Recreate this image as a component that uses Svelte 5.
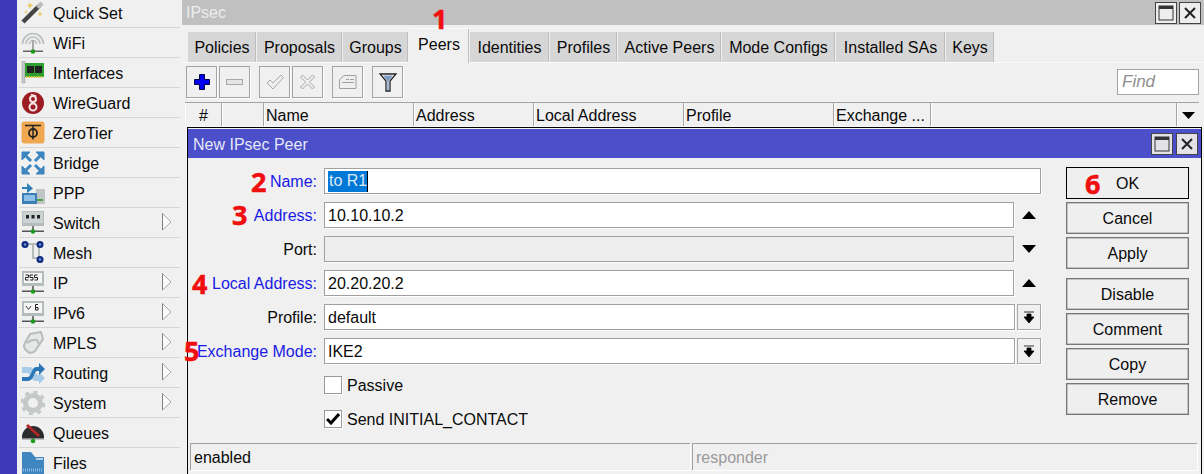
<script lang="ts">
  // Winbox style IPsec window with the "New IPsec Peer" dialog on top.
  const menu = [
    { id: 'quickset', label: 'Quick Set' },
    { id: 'wifi', label: 'WiFi' },
    { id: 'interfaces', label: 'Interfaces' },
    { id: 'wireguard', label: 'WireGuard' },
    { id: 'zerotier', label: 'ZeroTier' },
    { id: 'bridge', label: 'Bridge' },
    { id: 'ppp', label: 'PPP' },
    { id: 'switch', label: 'Switch', sub: true },
    { id: 'mesh', label: 'Mesh' },
    { id: 'ip', label: 'IP', sub: true },
    { id: 'ipv6', label: 'IPv6', sub: true },
    { id: 'mpls', label: 'MPLS', sub: true },
    { id: 'routing', label: 'Routing', sub: true },
    { id: 'system', label: 'System', sub: true },
    { id: 'queues', label: 'Queues' },
    { id: 'files', label: 'Files' }
  ];
  const tabs = [
    { label: 'Policies', w: 69 },
    { label: 'Proposals', w: 86 },
    { label: 'Groups', w: 66 },
    { label: 'Peers', w: 61 },
    { label: 'Identities', w: 80 },
    { label: 'Profiles', w: 68 },
    { label: 'Active Peers', w: 104 },
    { label: 'Mode Configs', w: 114 },
    { label: 'Installed SAs', w: 110 },
    { label: 'Keys', w: 49 }
  ];
  const columns = [
    { label: '#', cls: 'c-num' },
    { label: '', cls: 'c-flag' },
    { label: 'Name', cls: 'c-name' },
    { label: 'Address', cls: 'c-addr' },
    { label: 'Local Address', cls: 'c-local' },
    { label: 'Profile', cls: 'c-profile' },
    { label: 'Exchange ...', cls: 'c-mode' },
    { label: '', cls: 'c-rest' }
  ];
</script>

{#snippet winButtons()}
  <span class="winbtn">
    <svg width="16" height="16" viewBox="0 0 16 16"><rect x="1" y="1" width="14" height="14" fill="none" stroke="#333" /><rect x="1" y="1" width="14" height="3" fill="#333" /></svg>
  </span>
  <span class="winbtn">
    <svg width="12" height="12" viewBox="0 0 12 12"><path d="M1 1 L11 11 M11 1 L1 11" stroke="#222" stroke-width="2" /></svg>
  </span>
{/snippet}

{#snippet terminal(text)}
  <rect x="1" y="0" width="22" height="15" fill="#b5bcbc" />
  <rect x="3" y="2" width="18" height="10" fill="#f6f6f6" />
  {#if text === 'dots'}
    <rect x="2" y="1" width="20" height="11" fill="#ccd2d2" />
    <path d="M5 4h3v3.500H5zM10.500 4h3v3.500h-3zM16 4h3v3.500h-3z" fill="#222" />
  {:else if text === '255'}
    <path d="M4.500 4h3v2.500h-3v2.500h3M9 4h3M9 4v2.500h3v2.500H9M13.500 4h3M13.500 4v2.500h3v2.500h-3" fill="none" stroke="#222" />
  {:else}
    <path d="M5 5l2.500 3.500L10 5" fill="none" stroke="#444" />
    <path d="M17 3.500h-2.500v5.500H17V6.500h-2.500" fill="none" stroke="#222" />
  {/if}
  <rect x="11" y="15" width="2" height="5" fill="#777" />
  <rect x="1" y="19.500" width="22" height="1.500" fill="#555" />
  <circle cx="12" cy="20.500" r="2.300" fill="#1d9a1d" />
{/snippet}

{#snippet icon(id)}
  <svg class="mi" width="24" height="24" viewBox="0 0 24 24">
    {#if id === 'quickset'}
      <path d="M2 21 L18 5" stroke="#444" stroke-width="4.500" />
      <path d="M16.500 6.500 L21 2" stroke="#bbb" stroke-width="4.500" />
      <path d="M9 1l1 2.500 2.500 1-2.500 1-1 2.500-1-2.500-2.500-1 2.500-1zM19 10l.8 2.200 2.200.8-2.200.8-.8 2.200-.8-2.200-2.200-.8 2.200-.8zM5 9l.6 1.400 1.400.6-1.400.6L5 13l-.6-1.400L3 11l1.400-.6z" fill="#e6c85a" />
    {:else if id === 'wifi'}
      <path d="M1.500 13a10.500 10.500 0 0 1 21 0M5 13a7 7 0 0 1 14 0M8.500 13a3.500 3.500 0 0 1 7 0" fill="none" stroke="#bcc0c0" stroke-width="1.700" />
      <rect x="11" y="9" width="2" height="11" fill="#aaa" />
      <rect x="2" y="19.500" width="20" height="1.500" fill="#666" />
      <circle cx="12" cy="20.500" r="2.300" fill="#1d9a1d" />
    {:else if id === 'interfaces'}
      <rect x="1" y="0" width="3" height="22" fill="#c5c9c9" stroke="#999" stroke-width=".5" />
      <rect x="4" y="2" width="19" height="14" fill="#2fa02f" />
      <rect x="6" y="5" width="7" height="7" fill="#222" />
      <rect x="14" y="5" width="7" height="7" fill="#222" />
      <path d="M5 16h17" stroke="#d8c840" stroke-width="2" stroke-dasharray="1.500 1" />
    {:else if id === 'wireguard'}
      <circle cx="12" cy="12" r="11" fill="#9c1c22" />
      <circle cx="12" cy="16" r="3.500" fill="none" stroke="#f4e4e4" stroke-width="2" />
      <circle cx="12" cy="8" r="3" fill="none" stroke="#f4e4e4" stroke-width="2" />
      <path d="M10 3.500l5 1.500" stroke="#f4e4e4" stroke-width="1.500" />
    {:else if id === 'zerotier'}
      <rect x="0.500" y="0.500" width="23" height="22" rx="3" fill="#f0a850" />
      <path d="M4 4.500h16" stroke="#222" stroke-width="1.500" />
      <path d="M12 4.500v14" stroke="#222" stroke-width="1.500" />
      <circle cx="12" cy="12" r="4" fill="none" stroke="#222" stroke-width="1.800" />
    {:else if id === 'bridge'}
      <g fill="#3d86c0" stroke="#3d86c0">
        <path d="M1 1h8L1 9z" /><path d="M23 1h-8l8 8z" /><path d="M1 23h8l-8-8z" /><path d="M23 23h-8l8-8z" />
        <path d="M4 4l6 6M20 4l-6 6M4 20l6-6M20 20l-6-6" stroke-width="3" />
      </g>
    {:else if id === 'ppp'}
      <rect x="15" y="8" width="9" height="15" fill="#c0c4c4" />
      <path d="M16 19h6" stroke="#2a9a2a" stroke-width="1.500" />
      <rect x="1" y="12" width="15" height="11" fill="#3d7fb5" />
      <rect x="3" y="14" width="11" height="6" fill="#8ec0e8" />
      <path d="M1 6h5V2l6 5.500L6 12V8H1z" fill="#2f7fb8" />
    {:else if id === 'switch'}
      {@render terminal('dots')}
    {:else if id === 'mesh'}
      <path d="M6 3h12v16M12 3v14h6" fill="none" stroke="#b5baba" stroke-width="2" />
      <circle cx="4" cy="3.500" r="3.500" fill="#0c2a80" /><circle cx="4" cy="3.500" r="1.300" fill="#7d93c8" />
      <circle cx="19" cy="3.500" r="3.500" fill="#0c2a80" /><circle cx="19" cy="3.500" r="1.300" fill="#7d93c8" />
      <circle cx="19" cy="18.500" r="3.500" fill="#0c2a80" /><circle cx="19" cy="18.500" r="1.300" fill="#7d93c8" />
    {:else if id === 'ip'}
      {@render terminal('255')}
    {:else if id === 'ipv6'}
      {@render terminal('v6')}
    {:else if id === 'mpls'}
      <path d="M9 3 L20 1 L22 8 L14 20 Q11 23 7 21 L4 18 Q2 15 4 12z" fill="#e6e8e8" stroke="#b8bcbc" stroke-width="2" />
      <path d="M6 12 Q11 8 16 9 L18 13" fill="none" stroke="#b8bcbc" stroke-width="2" />
    {:else if id === 'routing'}
      <path d="M1 6h8c3 0 3 3 5 5l3 3h1v-3l6 6-6 6v-3h-3c-4 0-5-5-8-8H1z" fill="#a8cce8" />
      <path d="M1 16h6c3 0 4-10 8-10h3V2l6 6-6 6v-4h-2c-3 0-3 10-9 10H1z" fill="#2b76b5" />
    {:else if id === 'system'}
      <circle cx="12" cy="12" r="7.500" fill="none" stroke="#c4c8c8" stroke-width="5" />
      <circle cx="12" cy="12" r="11" fill="none" stroke="#c4c8c8" stroke-width="3" stroke-dasharray="4 4.640" />
    {:else if id === 'queues'}
      <path d="M1 16a11 11 0 0 1 22 0v1H1z" fill="#2c2c2c" />
      <path d="M6 4 L18 15" stroke="#b02828" stroke-width="3" />
      <rect x="1" y="17" width="22" height="1.500" fill="#888" />
      <rect x="11" y="17" width="2" height="3" fill="#777" />
      <circle cx="12" cy="20" r="2.300" fill="#1d9a1d" />
    {:else if id === 'files'}
      <path d="M1 1h9l4 5h9v17H1z" fill="#3f86c0" />
      <path d="M15 8h7" stroke="#dcecf8" stroke-width="1.500" />
      <path d="M2 19h20" stroke="#86b6dc" stroke-width="3" stroke-dasharray="1 1" />
    {/if}
  </svg>
{/snippet}

<div class="page">
  <div class="strip"></div>

  <nav class="side">
    {#each menu as item}
      <div class="mrow">
        {@render icon(item.id)}
        <span class="mlabel">{item.label}</span>
        {#if item.sub}
          <svg class="sub" width="10" height="18" viewBox="0 0 10 18"><path d="M.500 .500 L9 9 L.500 17z" fill="#fafafa" stroke="#a8a8a8" /><path d="M.500 .500V17" stroke="#808080" /></svg>
        {/if}
      </div>
    {/each}
  </nav>

  <main class="main">
    <header class="wintitle">
      <span>IPsec</span>
      <span class="winbtns">{@render winButtons()}</span>
    </header>

    <div class="tabs">
      {#each tabs as t}
        <span class="tab" class:active={t.label === 'Peers'} style="width: {t.w}px">{t.label}</span>
      {/each}
    </div>

    <div class="toolbar">
      <button class="tool">
        <svg width="16" height="16" viewBox="0 0 16 16"><path d="M5.500 .500h5v5h5v5h-5v5h-5v-5h-5v-5h5z" fill="#0000ee" stroke="#00004a" /></svg>
      </button>
      <button class="tool">
        <svg width="17" height="6" viewBox="0 0 17 6"><rect x=".5" y=".5" width="16" height="5" fill="#e4e4e4" stroke="#a8a8a8" /></svg>
      </button>
      <button class="tool gap">
        <svg width="18" height="16" viewBox="0 0 18 16"><path d="M1 9l3-3 3 3 8-8 2.500 2.500L7 15z" fill="#eee" stroke="#a8a8a8" /></svg>
      </button>
      <button class="tool">
        <svg width="17" height="16" viewBox="0 0 16 16"><path d="M1 3l2-2 5 5 5-5 2 2-5 5 5 5-2 2-5-5-5 5-2-2 5-5z" fill="#eee" stroke="#a8a8a8" /></svg>
      </button>
      <button class="tool gap">
        <svg width="18" height="14" viewBox="0 0 18 14"><path d="M5 .500h12v13H.5V4.500z" fill="#eee" stroke="#a0a0a0" /><path d="M7 4.500h3M11 4.500h4M3 7.500h12" stroke="#a0a0a0" /></svg>
      </button>
      <button class="tool gap">
        <svg width="18" height="19" viewBox="0 0 18 19"><path d="M1 1h16l-6 7v10H7V8z" fill="#fff" stroke="#222" stroke-width="1.300" /><path d="M4 2.500h10L9.700 8v9H8.300V8z" fill="#7e9cc4" /></svg>
      </button>
      <span class="find">Find</span>
    </div>

    <div class="thead">
      {#each columns as c}
        <span class="th {c.cls}">{c.label}</span>
      {/each}
      <span class="th c-arrow"><svg width="13" height="7" viewBox="0 0 13 7"><path d="M0 0h13L6.500 7z" fill="#000" /></svg></span>
    </div>

    <section class="dialog">
      <header class="dtitle">
        <span class="dname">New IPsec Peer</span>
        <span class="winbtns">{@render winButtons()}</span>
      </header>

      <div class="dbody">
        <div class="form">
          <div class="row">
            <span class="lbl req">Name:</span>
            <span class="input"><span class="sel">to R1</span><span class="caret"></span></span>
          </div>
          <div class="row">
            <span class="lbl req">Address:</span>
            <span class="input short">10.10.10.2</span>
            <svg class="updown" width="14" height="8" viewBox="0 0 14 8"><path d="M0 8L7 0l7 8z" fill="#000" /></svg>
          </div>
          <div class="row">
            <span class="lbl">Port:</span>
            <span class="input short off"></span>
            <svg class="updown" width="14" height="8" viewBox="0 0 14 8"><path d="M0 0l7 8 7-8z" fill="#000" /></svg>
          </div>
          <div class="row">
            <span class="lbl req">Local Address:</span>
            <span class="input short">20.20.20.2</span>
            <svg class="updown" width="14" height="8" viewBox="0 0 14 8"><path d="M0 8L7 0l7 8z" fill="#000" /></svg>
          </div>
          <div class="row">
            <span class="lbl">Profile:</span>
            <span class="input">default</span>
            <span class="drop"><svg width="12" height="13" viewBox="0 0 12 13"><path d="M1 1h10M4 3h4v3h3l-5 6-5-6h3z" fill="#000" stroke="#000" stroke-width=".8" /></svg></span>
          </div>
          <div class="row">
            <span class="lbl req">Exchange Mode:</span>
            <span class="input">IKE2</span>
            <span class="drop"><svg width="12" height="13" viewBox="0 0 12 13"><path d="M1 1h10M4 3h4v3h3l-5 6-5-6h3z" fill="#000" stroke="#000" stroke-width=".8" /></svg></span>
          </div>
          <div class="row">
            <span class="lbl"></span>
            <span class="check"></span>
            <span class="chk-label">Passive</span>
          </div>
          <div class="row">
            <span class="lbl"></span>
            <span class="check"><svg width="14" height="12" viewBox="0 0 14 12"><path d="M1 6l4 4 8-9" fill="none" stroke="#000" stroke-width="3" /></svg></span>
            <span class="chk-label">Send INITIAL_CONTACT</span>
          </div>
        </div>

        <div class="actions">
          <button class="act default">OK</button>
          <button class="act">Cancel</button>
          <button class="act">Apply</button>
          <button class="act split">Disable</button>
          <button class="act">Comment</button>
          <button class="act">Copy</button>
          <button class="act">Remove</button>
        </div>
      </div>

      <footer class="status">
        <span class="cell first">enabled</span>
        <span class="cell muted">responder</span>
      </footer>
    </section>
  </main>

  <span class="mark n1">1</span>
  <span class="mark n2">2</span>
  <span class="mark n3">3</span>
  <span class="mark n4">4</span>
  <span class="mark n5">5</span>
  <span class="mark n6">6</span>
</div>

<style>
  :global(body) {
    margin: 0;
    background: #f0f0f0;
    overflow: hidden;
  }
  .page {
    position: relative;
    display: flex;
    width: 1204px;
    height: 474px;
    overflow: hidden;
    font: 16px "Liberation Sans", Arial, sans-serif;
    color: #0a0a0a;
    background: #f0f0f0;
  }
  .strip {
    flex: 0 0 17px;
    background: #3c38b8;
  }

  .side {
    flex: 0 0 165px;
    margin-top: -2px;
    padding-left: 2px;
    box-sizing: border-box;
  }
  .mrow {
    display: flex;
    align-items: center;
    height: 30px;
    box-sizing: border-box;
    border-bottom: 1px solid #d6d6d6;
    width: 161px;
    position: relative;
  }
  .mi {
    margin-left: 2px;
    flex: none;
  }
  .mlabel {
    margin-left: 8px;
    padding-top: 3px;
  }
  .sub {
    position: absolute;
    left: 143px;
    top: 5px;
  }

  .main {
    flex: 1;
    min-width: 0;
    display: flex;
    flex-direction: column;
  }
  .wintitle {
    display: flex;
    align-items: center;
    justify-content: space-between;
    height: 25px;
    padding-left: 4px;
    background: #c0c0c0;
    color: #ececec;
  }
  .winbtns {
    display: flex;
    gap: 2px;
  }
  .winbtn {
    display: flex;
    align-items: center;
    justify-content: center;
    width: 20px;
    height: 20px;
    background: #eeeeee;
    border: 1px solid #444;
  }
  .wintitle .winbtns {
    padding-right: 3px;
  }

  .tabs {
    display: flex;
    align-items: flex-end;
    height: 37px;
    padding-left: 6px;
    border-bottom: 1px solid #fafafa;
  }
  .tab {
    display: flex;
    align-items: center;
    justify-content: center;
    box-sizing: border-box;
    height: 30px;
    padding-top: 1px;
    background: #d6d6d6;
    border-right: 1px solid #f0f0f0;
    box-shadow: inset -1px 0 0 #bdbdbd;
  }
  .tab.active {
    height: 35px;
    background: #f0f0f0;
    border-top: 1px solid #fafafa;
    padding-top: 0;
    padding-bottom: 3px;
    position: relative;
    margin-bottom: -1px;
  }

  .toolbar {
    display: flex;
    align-items: center;
    gap: 2px;
    height: 32px;
    margin-top: 3px;
    padding: 0 5px 0 4px;
  }
  .tool {
    display: flex;
    align-items: center;
    justify-content: center;
    width: 31px;
    height: 32px;
    padding: 0;
    background: #f0f0f0;
    border: 1px solid #a4a4a4;
    box-shadow: 1px 1px 0 #fff;
  }
  .tool.gap {
    margin-left: 7px;
  }
  .find {
    margin-left: auto;
    width: 82px;
    height: 26px;
    box-sizing: border-box;
    padding: 2px 4px;
    background: #fff;
    border: 1px solid #a4a4a4;
    color: #8e8e8e;
    font-style: italic;
    font-size: 17px;
  }

  .thead {
    display: flex;
    height: 25px;
    margin: 4px 5px 0 3px;
    border-top: 1px solid #a4a4a4;
    box-sizing: border-box;
  }
  .th {
    display: flex;
    align-items: center;
    box-sizing: border-box;
    padding: 2px 0 0 1px;
    border-right: 1px solid #a4a4a4;
    border-left: 1px solid #fff;
    white-space: nowrap;
  }
  .c-num { width: 37px; justify-content: center; padding: 2px 0 0; }
  .c-flag { width: 42px; }
  .c-name { width: 150px; }
  .c-addr { width: 120px; }
  .c-local { width: 150px; }
  .c-profile { width: 150px; }
  .c-mode { width: 97px; }
  .c-rest { width: 246px; }
  .c-arrow {
    flex: 1;
    justify-content: center;
    padding: 0;
    border-right: 0;
  }

  .dialog {
    flex: 1;
    margin: 0 2px 0 5px;
    border: 1px solid #000;
    border-bottom: 0;
    outline: 1px solid #f8f8f8;
    background: #f0f0f0;
    display: flex;
    flex-direction: column;
    min-height: 0;
  }
  .dtitle {
    display: flex;
    align-items: center;
    justify-content: space-between;
    height: 29px;
    margin-top: 1px;
    padding-left: 5px;
    background: #4b4fc9;
    color: #e6e8f8;
  }
  .dname {
    padding-top: 3px;
  }
  .dtitle .winbtns {
    gap: 3px;
    padding-right: 3px;
  }
  .dtitle .winbtn {
    background: #e4e2e6;
  }
  .dbody {
    display: flex;
    gap: 25px;
    height: 285px;
  }
  .form {
    width: 853px;
    padding-top: 10px;
    display: flex;
    flex-direction: column;
    gap: 8px;
  }
  .row {
    display: flex;
    align-items: center;
    height: 26px;
    gap: 7px;
    position: relative;
  }
  .lbl {
    flex: 0 0 129px;
    text-align: right;
    white-space: nowrap;
    padding-top: 2px;
  }
  .lbl.req {
    color: #1a1ae6;
  }
  .input {
    flex: 1;
    height: 26px;
    box-sizing: border-box;
    border: 1px solid #a0a0a0;
    box-shadow: 1px 1px 0 #fff;
    background: #fff;
    padding: 2px 3px 0;
    display: flex;
    align-items: center;
    white-space: nowrap;
  }
  .input.short {
    flex: 0 0 690px;
  }
  .input.off {
    background: #eeeeee;
  }
  .sel {
    background: #0078d7;
    color: #dfe9f4;
    padding: 1px 0 2px 1px;
    width: 39px;
    box-sizing: border-box;
    margin-top: -2px;
  }
  .caret {
    width: 1px;
    height: 21px;
    margin-top: -2px;
    background: #000;
  }
  .updown {
    position: absolute;
    left: 834px;
  }
  .drop {
    flex: 0 0 24px;
    margin-left: -5px;
    height: 26px;
    box-sizing: border-box;
    border: 1px solid #a8a8a8;
    box-shadow: 1px 1px 0 #fff;
    display: flex;
    align-items: center;
    justify-content: center;
  }
  .check {
    width: 18px;
    height: 18px;
    box-sizing: border-box;
    border: 1px solid #9a9a9a;
    box-shadow: 1px 1px 0 #fff;
    background: #fff;
    display: flex;
    align-items: center;
    justify-content: center;
  }
  .chk-label {
    margin-left: -2px;
    padding-top: 2px;
  }

  .actions {
    width: 123px;
    padding-top: 9px;
    display: flex;
    flex-direction: column;
    gap: 3px;
  }
  .act {
    height: 32px;
    padding: 2px 0 0;
    font: inherit;
    color: inherit;
    background: #efefef;
    border: 1px solid #777;
    box-shadow: inset 0 0 0 .5px #999;
  }
  .act.default {
    border-color: #000;
    box-shadow: none;
  }
  .act.split {
    margin-top: 6px;
  }

  .status {
    display: flex;
    gap: 2px;
    height: 27px;
    margin: 0 4px 0 2px;
  }
  .cell {
    display: flex;
    align-items: center;
    box-sizing: border-box;
    padding: 2px 3px 0;
    border-top: 1px solid #a0a0a0;
    border-left: 1px solid #a0a0a0;
    box-shadow: 1px 1px 0 #fff;
  }
  .cell.first {
    flex: 0 0 500px;
  }
  .cell.muted {
    flex: 1;
    color: #9a9a9a;
  }

  .mark {
    position: absolute;
    font: 700 27px/1 "Open Sans", sans-serif;
    color: #f00f0f;
    -webkit-text-stroke: 0.5px #f00f0f;
  }
  .n1 { left: 432px; top: 5px; }
  .n2 { left: 251px; top: 168px; }
  .n3 { left: 232px; top: 201px; }
  .n4 { left: 192px; top: 270px; }
  .n5 { left: 184px; top: 337px; }
  .n6 { left: 1085px; top: 170px; }
</style>
